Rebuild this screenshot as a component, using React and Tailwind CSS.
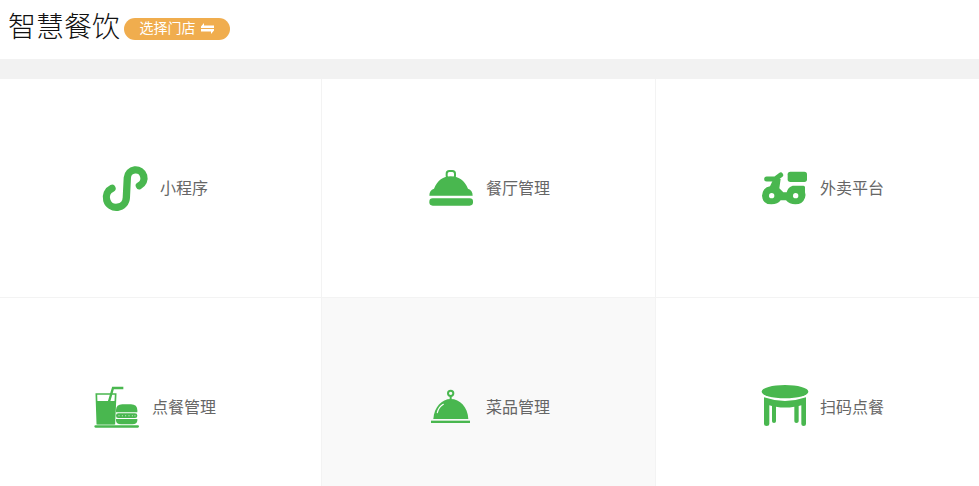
const G = "#49b74f";

function Mini() {
  return (
    <svg width="66" height="66" viewBox="0 0 198 198" fill="none">
      <path d="M66 100 A30 30 0 1 0 109 128 L112 68 A25 25 0 1 1 148 92" stroke={G} strokeWidth="22" strokeLinecap="round" />
    </svg>
  );
}

function Cloche() {
  return (
    <svg width="66" height="66" viewBox="0 0 198 198" fill={G}>
      <rect x="80" y="48" width="25" height="22" rx="8" fill="none" stroke={G} strokeWidth="6" />
      <path d="M28 122 Q28 106 42 101 C52 76 70 64 92 64 C115 64 134 76 144 101 Q158 106 158 122 Z" />
      <rect x="28" y="130" width="131" height="22" rx="10" />
    </svg>
  );
}

function Scooter() {
  return (
    <svg width="66" height="66" viewBox="0 0 198 198" fill={G}>
      <rect x="113" y="50" width="58" height="31" rx="8" />
      <path d="M50 72 H76 L92 60" fill="none" stroke={G} strokeWidth="15" strokeLinecap="round" strokeLinejoin="round" />
      <path d="M36 122 Q38 98 60 94 L72 68 L92 72 L88 100 Q96 108 100 112 H110 Q114 96 128 92 H160 Q166 92 165 100 V112 Q168 120 165 128 Q158 148 136 148 Q118 148 108 136 H92 Q84 148 64 148 Q38 148 36 122 Z" />
      <circle cx="65" cy="122" r="8" fill="#fff" />
      <circle cx="137" cy="122" r="8" fill="#fff" />
    </svg>
  );
}

function Meal() {
  return (
    <svg width="66" height="64" viewBox="0 0 198 192" fill={G}>
      <path d="M72 80 L84 39 H115" fill="none" stroke={G} strokeWidth="7" />
      <path d="M34 57 H92 L88 146 H37 Z" fill="none" stroke={G} strokeWidth="5" />
      <path d="M35 78 H91 L88 148 H37 Z" />
      <path d="M93 112 V106 Q93 88 112 88 H138 Q157 88 157 106 V112 Z" />
      <rect x="93" y="115" width="64" height="14" rx="7" />
      <path d="M93 132 H157 V136 Q157 148 142 148 H108 Q93 148 93 136 Z" />
      <g fill="#fff">
        <circle cx="102" cy="122" r="1.5" /><circle cx="112" cy="122" r="1.5" /><circle cx="122" cy="122" r="1.5" />
        <circle cx="132" cy="122" r="1.5" /><circle cx="142" cy="122" r="1.5" /><circle cx="150" cy="122" r="1.5" />
      </g>
      <rect x="28" y="151" width="134" height="7" rx="3.5" />
    </svg>
  );
}

function Dish() {
  return (
    <svg width="66" height="64" viewBox="0 0 198 192" fill={G}>
      <circle cx="92" cy="55" r="8" fill="none" stroke={G} strokeWidth="6" />
      <rect x="89" y="62" width="6" height="12" />
      <path d="M40 132 C42 96 66 72 92 72 C120 72 143 96 145 132 Z" />
      <path d="M52 113 Q56 96 70 88" fill="none" stroke="#fff" strokeWidth="3.5" strokeLinecap="round" />
      <rect x="33" y="137" width="117" height="7" />
    </svg>
  );
}

function Table() {
  return (
    <svg width="66" height="66" viewBox="0 0 198 198" fill={G}>
      <ellipse cx="105" cy="53" rx="70" ry="20" />
      <path d="M42 70 Q105 92 168 70 V150 Q168 156 161 156 Q154 156 154 150 V94 L146 96 V142 Q146 147 139 147 Q133 147 133 142 V98 Q105 103 78 98 V142 Q78 147 72 147 Q66 147 66 142 V96 L58 94 V150 Q58 156 50 156 Q42 156 42 150 Z" />
    </svg>
  );
}

function Cell({ icon, label, pad, gap, active, border }) {
  return (
    <div className={`flex h-[218px] items-center ${pad} ${gap} ${active ? "bg-[#f9f9f9]" : "bg-white"} ${border ? "border-r border-[#f3f3f3]" : ""}`}>
      {icon}
      <span className="pt-[2px] text-[16px] leading-6 text-[#666666]">{label}</span>
    </div>
  );
}

export default function App() {
  return (
    <div className="h-[486px] overflow-hidden bg-white font-['Liberation_Sans','Noto_Sans_CJK_SC',sans-serif]">
      <header className="flex h-[59px] items-center pb-[4px] pl-[8px]">
        <h1 className="text-[28px] font-light leading-10 text-[#111111]">智慧餐饮</h1>
        <button className="mt-[2px] ml-[4px] flex h-[22px] w-[106px] items-center justify-center gap-[4px] rounded-full bg-[#f0ad4e] text-[14px] text-white">
          选择门店
          <svg width="15" height="11" viewBox="0 0 15 11" fill="#fff">
            <path d="M4 0 V2.5 H14 V5 H1 V3.5 Z" />
            <path d="M11 11 V8.5 H1 V6 H14 V7.5 Z" />
          </svg>
        </button>
      </header>
      <div className="h-5 bg-[#f2f2f2]" />
      <div className="grid grid-cols-[322px_334px_1fr]">
        <Cell icon={<Mini />} label="小程序" pad="pl-[90px]" gap="gap-[4px]" border />
        <Cell icon={<Cloche />} label="餐厅管理" pad="pl-[98px]" gap="gap-0" border />
        <Cell icon={<Scooter />} label="外卖平台" pad="pl-[94px]" gap="gap-[4px]" />
        <div className="col-span-3 h-px bg-[#f3f3f3]" />
        <Cell icon={<Meal />} label="点餐管理" pad="pl-[85px]" gap="gap-px" border />
        <Cell icon={<Dish />} label="菜品管理" pad="pl-[98px]" gap="gap-0" active border />
        <Cell icon={<Table />} label="扫码点餐" pad="pl-[94px]" gap="gap-[4px]" />
      </div>
    </div>
  );
}
